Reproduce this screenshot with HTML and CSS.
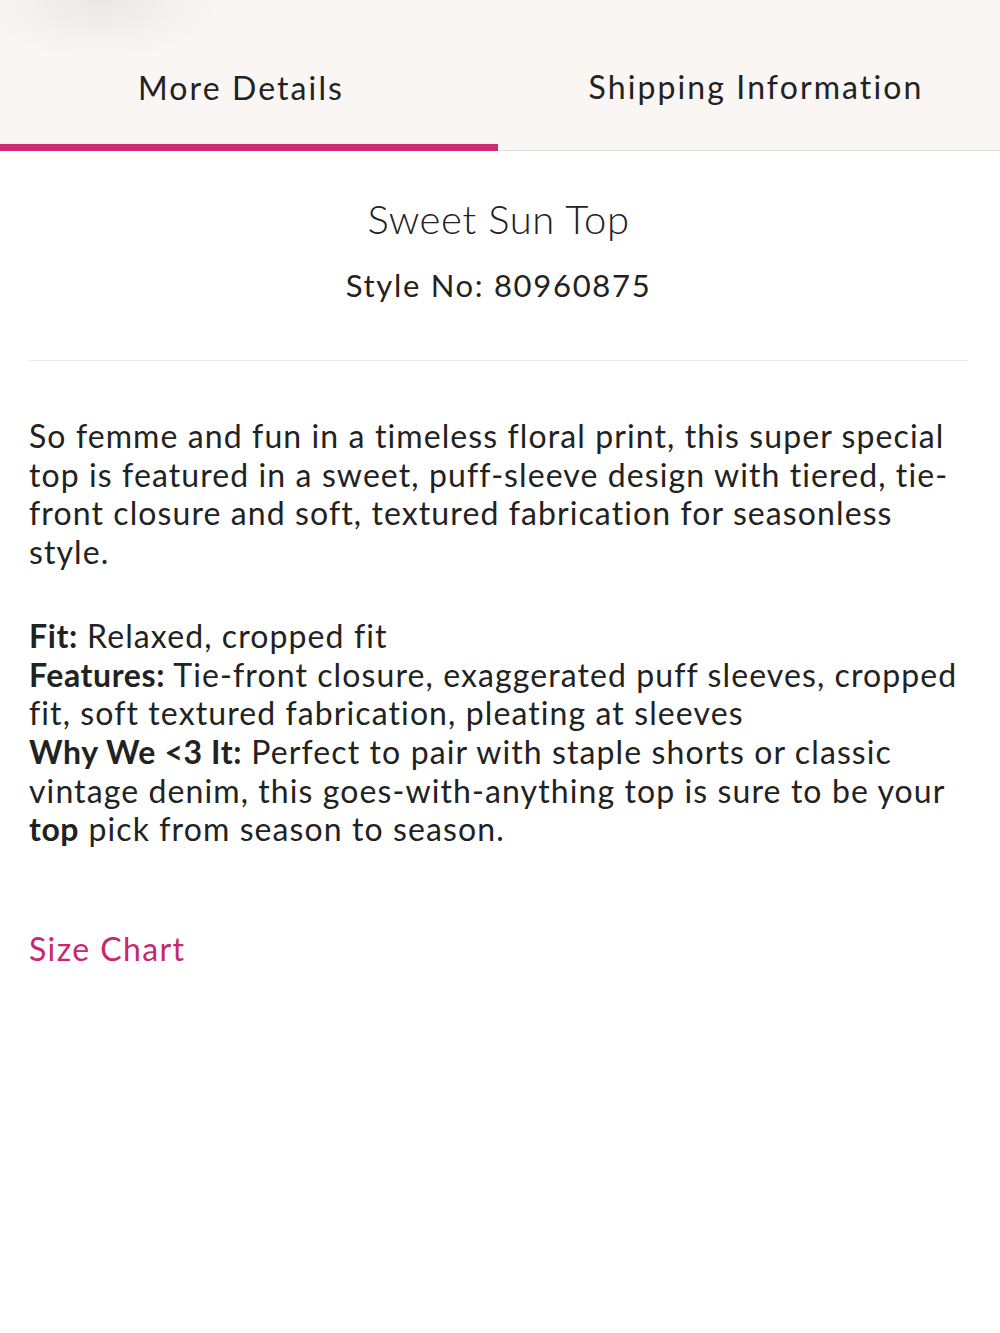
FILE: index.html
```html
<!DOCTYPE html>
<html>
<head>
<meta charset="utf-8">
<link rel="stylesheet" href="styles.css">
</head>
<body>
<div class="tabs">
  <div class="tab active">More Details</div>
  <div class="tab second">Shipping Information</div>
</div>
<div class="content">
  <h1 class="title">Sweet Sun Top</h1>
  <div class="style-no">Style No: 80960875</div>
  <hr class="divider">
  <p class="desc">So femme and fun in a timeless floral print, this super special top is featured in a sweet, puff-sleeve design with tiered, tie-front closure and soft, textured fabrication for seasonless style.</p>
  <p class="desc"><b>Fit:</b> Relaxed, cropped fit<br><b>Features:</b> Tie-front closure, exaggerated puff sleeves, cropped fit, soft textured fabrication, pleating at sleeves<br><b>Why We &lt;3 It:</b> Perfect to pair with staple shorts or classic vintage denim, this goes-with-anything top is sure to be your <b>top</b> pick from season to season.</p>
  <a class="size-chart">Size Chart</a>
</div>
</body>
</html>
```
FILE: styles.css
```css
* { box-sizing: border-box; }
body {
  margin: 0;
  background: #fff;
  font-family: Lato, "Open Sans", sans-serif;
  color: #222;
}
.tabs {
  display: flex;
  background: #faf6f3;
  height: 151px;
  background-image: radial-gradient(ellipse 120px 60px at 100px 0px, rgba(0,0,0,0.06), rgba(0,0,0,0));
}
.tab {
  flex: 1;
  display: flex;
  align-items: center;
  justify-content: center;
  padding-top: 23px;
  font-size: 32px;
  letter-spacing: 2.1px;
  color: #222;
  border-bottom: 1px solid #ddd;
}
.tab.active {
  flex: 0 0 498px;
  border-bottom: 7px solid #cf2c74;
  padding-top: 30px;
  padding-right: 16px;
}
.tab.second {
  padding-left: 14px;
}
.content {
  padding: 0 32px 0 29px;
}
.title {
  margin: 44px 0 0;
  text-align: center;
  font-weight: 300;
  font-size: 40px;
  letter-spacing: 0.6px;
  line-height: 1.2;
}
.style-no {
  text-align: center;
  font-size: 31px;
  letter-spacing: 1.7px;
  margin-top: 23px;
}
.divider {
  border: 0;
  border-top: 1px solid #eeeae7;
  margin: 56px 0 0;
}
.desc {
  font-size: 32px;
  line-height: 38.7px;
  letter-spacing: 1.1px;
  margin: 56px 0 0;
}
.desc + .desc { margin-top: 45px; }
.desc b { font-weight: 700; letter-spacing: 0.6px; }
.size-chart {
  display: block;
  margin-top: 80px;
  font-size: 32px;
  color: #c8276f;
  letter-spacing: 1.4px;
}
```
